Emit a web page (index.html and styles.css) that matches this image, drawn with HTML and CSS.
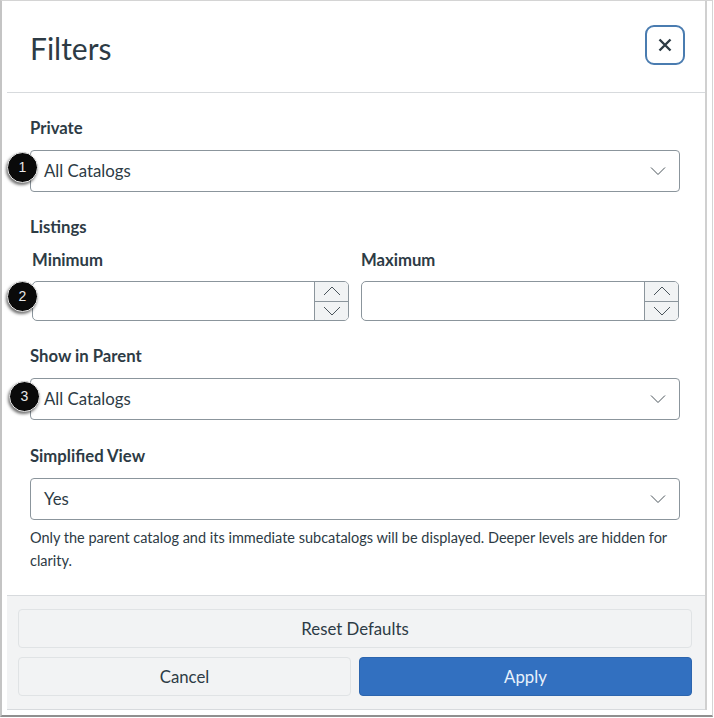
FILE: index.html
```html
<!DOCTYPE html>
<html lang="en">
  <head>
    <meta charset="UTF-8" />
    <meta name="viewport" content="width=device-width, initial-scale=1.0" />
    <title>Filters</title>
    <link rel="stylesheet" href="styles.css">
  </head>
  <body>
    <div class="frame">
      <div class="modal">
        <div class="modal-header">
          <h1>Filters</h1>
          <button class="close-button" aria-label="Close">
            <svg width="14" height="14" viewBox="0 0 14 14"><path d="M1.5 1.5l11 11M12.5 1.5l-11 11" /></svg>
          </button>
        </div>

        <div class="modal-body">
          <div class="field">
            <div class="label">Private</div>
            <div class="select">
              <span>All Catalogs</span>
              <svg class="chevron" width="16" height="10" viewBox="0 0 16 10"><path d="M1 1.5l7 7 7-7" /></svg>
            </div>
          </div>

          <div class="field listings">
            <div class="label">Listings</div>
            <div class="number-row">
              <div class="number-field">
                <div class="label">Minimum</div>
                <div class="number-input">
                  <div class="number-value"></div>
                  <div class="stepper">
                    <div class="step"><svg width="18" height="10" viewBox="0 0 18 10"><path d="M1 9l8-8 8 8" /></svg></div>
                    <div class="step"><svg width="18" height="10" viewBox="0 0 18 10"><path d="M1 1l8 8 8-8" /></svg></div>
                  </div>
                </div>
              </div>
              <div class="number-field">
                <div class="label">Maximum</div>
                <div class="number-input">
                  <div class="number-value"></div>
                  <div class="stepper">
                    <div class="step"><svg width="18" height="10" viewBox="0 0 18 10"><path d="M1 9l8-8 8 8" /></svg></div>
                    <div class="step"><svg width="18" height="10" viewBox="0 0 18 10"><path d="M1 1l8 8 8-8" /></svg></div>
                  </div>
                </div>
              </div>
            </div>
          </div>

          <div class="field parent">
            <div class="label">Show in Parent</div>
            <div class="select">
              <span>All Catalogs</span>
              <svg class="chevron" width="16" height="10" viewBox="0 0 16 10"><path d="M1 1.5l7 7 7-7" /></svg>
            </div>
          </div>

          <div class="field simplified">
            <div class="label">Simplified View</div>
            <div class="select">
              <span>Yes</span>
              <svg class="chevron" width="16" height="10" viewBox="0 0 16 10"><path d="M1 1.5l7 7 7-7" /></svg>
            </div>
            <p class="help">Only the parent catalog and its immediate subcatalogs will be displayed. Deeper levels are hidden for clarity.</p>
          </div>
        </div>

        <div class="modal-footer">
          <button class="btn">Reset Defaults</button>
          <div class="btn-row">
            <button class="btn">Cancel</button>
            <button class="btn primary">Apply</button>
          </div>
        </div>
      </div>

      <div class="callout one">1</div>
      <div class="callout two">2</div>
      <div class="callout three">3</div>
    </div>
  </body>
</html>
```

FILE: styles.css
```css
html,
body {
  margin: 0;
  background: white;
}

body {
  font-family: Lato, 'Open Sans', sans-serif;
  color: #2d3b45;
  width: 714px;
  height: 718px;
  overflow: hidden;
}

.frame {
  position: relative;
  box-sizing: border-box;
  width: 713px;
  height: 717px;
  padding: 0 5px 5px 5px;
  background: white;
  border: 1px solid #d4d4d4;
  border-left: 2px solid #c4c4c4;
  border-bottom: 2px solid #8f8f8f;
}

.modal {
  width: 700px;
  height: 100%;
  box-sizing: border-box;
  display: flex;
  flex-direction: column;
  border-right: 2px solid #d0d0d0;
}

.modal-header {
  height: 92px;
  box-sizing: border-box;
  flex: none;
  display: flex;
  align-items: center;
  justify-content: space-between;
  padding: 0 20px 0 23px;
  border-bottom: 1px solid #d7dadd;
}

.modal-header h1 {
  margin: 0;
  font-size: 30px;
  font-weight: 400;
  color: #2d3b45;
  position: relative;
  top: 1px;
}

.close-button {
  width: 40px;
  height: 40px;
  padding: 0;
  background: white;
  border: 2px solid #4a7cb0;
  border-radius: 9px;
  display: flex;
  align-items: center;
  justify-content: center;
  position: relative;
  top: -2px;
}

.close-button path {
  fill: none;
  stroke: #2d3b45;
  stroke-width: 2.4;
}

.modal-body {
  flex: 1;
  padding: 24px 25px 0 23px;
}

.label {
  font-size: 16.7px;
  font-weight: 700;
  line-height: 22px;
  color: #2d3b45;
}

.select {
  height: 42px;
  box-sizing: border-box;
  margin-top: 11px;
  padding: 0 13px;
  display: flex;
  align-items: center;
  justify-content: space-between;
  background: white;
  border: 1px solid #8b959c;
  border-radius: 4px;
  font-size: 16.8px;
  line-height: 20px;
}

.chevron path,
.step path {
  fill: none;
  stroke: #4a545b;
  stroke-width: 1;
}

.listings {
  margin-top: 24px;
}

.number-row {
  display: grid;
  grid-template-columns: 317px 318px;
  gap: 12px;
  margin-top: 11px;
  padding-left: 2px;
}

.number-field .number-input {
  margin-top: 10px;
}

.number-input {
  height: 40px;
  box-sizing: border-box;
  display: flex;
  border: 1px solid #8b959c;
  border-radius: 5px;
  overflow: hidden;
}

.number-value {
  flex: 1;
}

.stepper {
  width: 33px;
  flex: none;
  display: flex;
  flex-direction: column;
  border-left: 1px solid #8b959c;
  background: #f1f3f4;
}

.step {
  flex: 1;
  display: flex;
  align-items: center;
  justify-content: center;
}

.step + .step {
  border-top: 1px solid #8b959c;
}

.parent {
  margin-top: 24px;
}

.simplified {
  margin-top: 25px;
}

.help {
  margin: 6px 0 0;
  font-size: 14.5px;
  line-height: 23px;
  color: #2d3b45;
}

.modal-footer {
  height: 115px;
  box-sizing: border-box;
  flex: none;
  padding: 13px 13px 0 11px;
  background: #f2f3f4;
  border-top: 1px solid #d7dadd;
  border-bottom: 1px solid #d7dadd;
}

.btn {
  display: block;
  width: 100%;
  height: 39px;
  padding: 0;
  font-family: inherit;
  font-size: 16.8px;
  color: #2d3b45;
  background: #f2f3f4;
  border: 1px solid #e0e3e5;
  border-radius: 4px;
}

.btn-row {
  display: flex;
  gap: 8px;
  margin-top: 9px;
}

.btn.primary {
  background: #3270c0;
  border-color: #2c65ae;
  color: #e8f2fc;
}

.callout {
  position: absolute;
  width: 29px;
  height: 29px;
  border-radius: 50%;
  background: #0a0a0a;
  color: #e8e8e8;
  font-family: 'Liberation Sans', sans-serif;
  font-size: 14px;
  line-height: 29px;
  text-align: center;
  box-shadow: -1px 2px 3px rgba(0, 0, 0, 0.55);
  border: 1px solid #e8e8e8;
}

.callout.one {
  left: 5px;
  top: 151px;
}

.callout.two {
  left: 5px;
  top: 280px;
}

.callout.three {
  left: 7px;
  top: 380px;
}
```
